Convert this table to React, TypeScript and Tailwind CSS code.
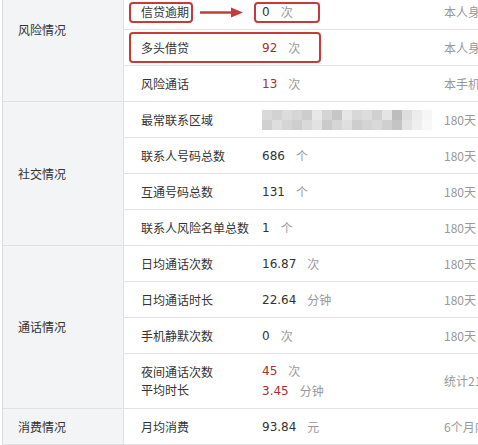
import React from 'react';

type Row = {
  label: React.ReactNode;
  value: React.ReactNode;
  note: string;
  tall?: boolean;
};

const cn = '"Noto Sans CJK SC", "Microsoft YaHei", sans-serif';

function Num({ v, red, unit }: { v: string; red?: boolean; unit: string }) {
  return (
    <span className="flex items-center">
      <span
        className={`mr-[11px] text-[12px] font-['DejaVu_Sans',sans-serif] ${red ? 'text-[#a82f2f]' : 'text-[#333]'}`}
      >
        {v}
      </span>
      <span className="text-[12px] text-[#999]">{unit}</span>
    </span>
  );
}

// 马赛克打码区域
const mosaic = [
  ['#d9d9d9', '#d2d2d2', '#dcdcdc', '#d6d6d6', '#cdcdcd', '#e8e8e8', '#d4d4d4', '#c6c6c6', '#e6e6e6', '#d8d8d8', '#dcdcdc', '#d0d0d0', '#e4e4e4', '#bdbdbd', '#dedede', '#ececec', '#f6f6f6'],
  ['#d0d0d0', '#dedede', '#d5d5d5', '#cecece', '#d9d9d9', '#e2e2e2', '#cacaca', '#d6d6d6', '#dfdfdf', '#cdcdcd', '#d4d4d4', '#d9d9d9', '#cfcfcf', '#c4c4c4', '#e3e3e3', '#efefef', '#f8f8f8'],
];

function Mosaic() {
  return (
    <div className="flex flex-col blur-[0.6px]">
      {mosaic.map((r, i) => (
        <div key={i} className="flex">
          {r.map((c, j) => (
            <div key={j} className="h-[10px] w-[10px]" style={{ background: c }} />
          ))}
        </div>
      ))}
    </div>
  );
}

const groups: { name: string; shift?: boolean; rows: Row[] }[] = [
  {
    name: '风险情况',
    shift: true,
    rows: [
      { label: '信贷逾期', value: <Num v="0" unit="次" />, note: '本人身份证' },
      { label: '多头借贷', value: <Num v="92" red unit="次" />, note: '本人身份证' },
      { label: '风险通话', value: <Num v="13" red unit="次" />, note: '本手机号' },
    ],
  },
  {
    name: '社交情况',
    rows: [
      { label: '最常联系区域', value: <Mosaic />, note: '180天' },
      { label: '联系人号码总数', value: <Num v="686" unit="个" />, note: '180天' },
      { label: '互通号码总数', value: <Num v="131" unit="个" />, note: '180天' },
      { label: '联系人风险名单总数', value: <Num v="1" unit="个" />, note: '180天' },
    ],
  },
  {
    name: '通话情况',
    rows: [
      { label: '日均通话次数', value: <Num v="16.87" unit="次" />, note: '180天' },
      { label: '日均通话时长', value: <Num v="22.64" unit="分钟" />, note: '180天' },
      { label: '手机静默次数', value: <Num v="0" unit="次" />, note: '180天' },
      {
        label: (
          <div className="leading-[18px]">
            <div>夜间通话次数</div>
            <div>平均时长</div>
          </div>
        ),
        value: (
          <div className="flex flex-col leading-[20px]">
            <Num v="45" red unit="次" />
            <Num v="3.45" red unit="分钟" />
          </div>
        ),
        note: '统计21:00',
        tall: true,
      },
    ],
  },
  {
    name: '消费情况',
    rows: [{ label: '月均消费', value: <Num v="93.84" unit="元" />, note: '6个月内' }],
  },
];

export default function App() {
  return (
    <div className="relative h-[445px] w-[478px] overflow-hidden bg-white" style={{ fontFamily: cn }}>
      <div className="ml-[2px] -mt-[6px] w-[600px] border-b border-l border-[#dcdcdc]">
        {groups.map((g) => (
          <div key={g.name} className="flex">
            <div
              className={`flex w-[121px] shrink-0 items-center border-r border-b border-[#e1e1e1] bg-[#f2f4f6] pl-[15px] text-[12px] text-[#333] ${g.shift ? 'pb-[35px]' : ''}`}
            >
              {g.name}
            </div>
            <div className="flex flex-1 flex-col">
              {g.rows.map((r, i) => (
                <div
                  key={i}
                  className={`flex items-center border-b border-[#e3e3e3] text-[12px] ${r.tall ? 'h-[55px]' : 'h-[36px]'}`}
                >
                  <div className="w-[138px] shrink-0 pl-[17px] text-[#333]">{r.label}</div>
                  <div className="w-[182px] shrink-0">{r.value}</div>
                  <div className="whitespace-nowrap text-[#999]">{r.note}</div>
                </div>
              ))}
            </div>
          </div>
        ))}
      </div>

      {/* 标注框 */}
      <div className="absolute left-[129px] top-[2px] h-[21px] w-[64px] rounded-[4px] border-[2.5px] border-[#c8393b]" />
      <div className="absolute left-[254px] top-[2px] h-[21px] w-[66px] rounded-[4px] border-[2.5px] border-[#c8393b]" />
      <div className="absolute left-[129px] top-[32px] h-[31px] w-[192px] rounded-[4px] border-[2.5px] border-[#c8393b]" />
      <svg className="absolute left-[199px] top-[5px]" width="48" height="16" viewBox="0 0 48 16">
        <line x1="1" y1="7.5" x2="34" y2="7.5" stroke="#c8393b" strokeWidth="2.5" />
        <polygon points="32,2.5 44,7.5 32,12.5" fill="#c8393b" />
      </svg>
    </div>
  );
}
